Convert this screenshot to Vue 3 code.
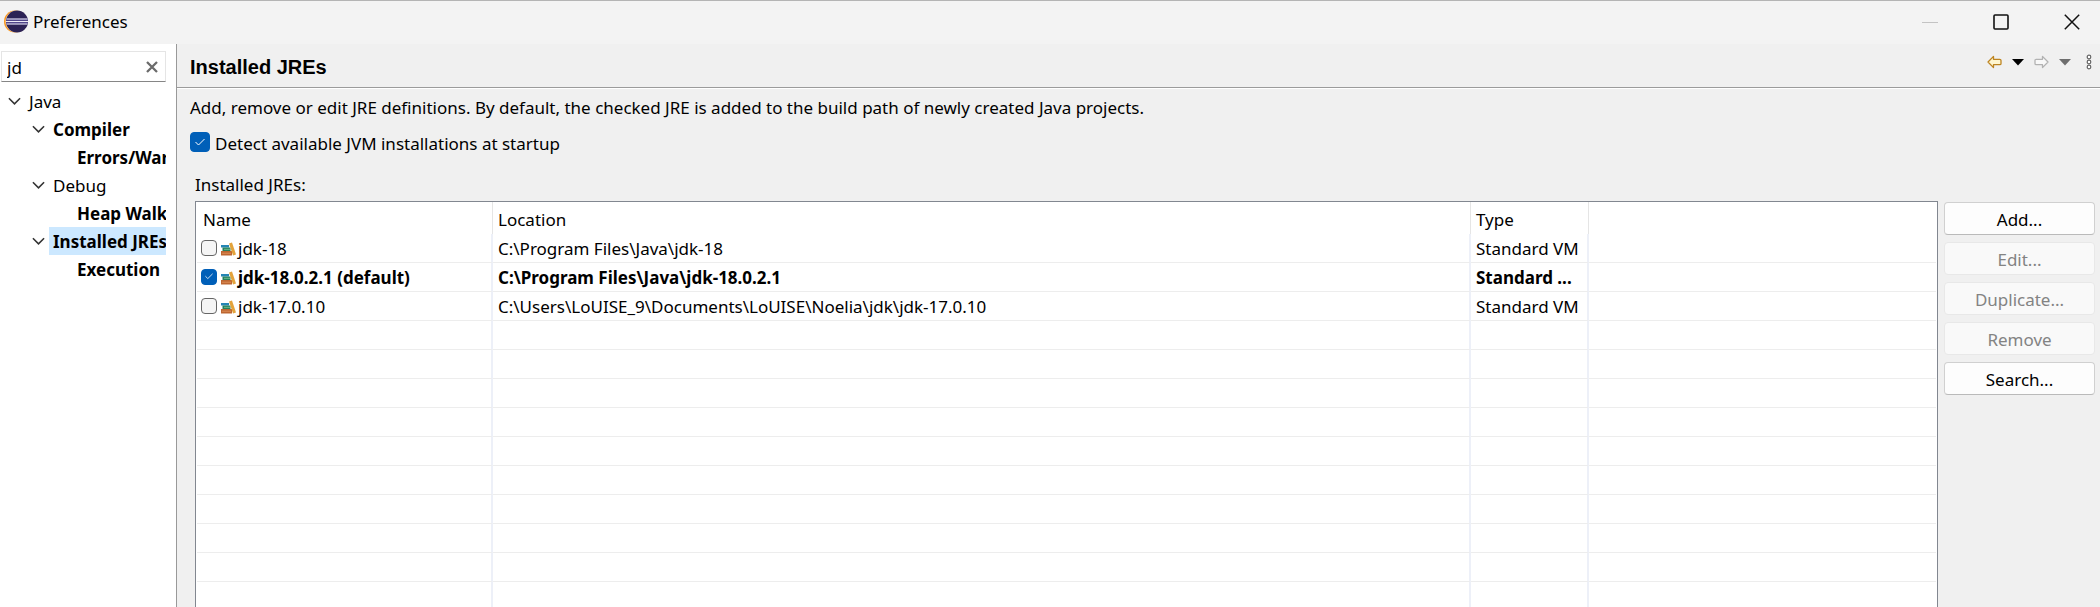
<script setup>
import { ref } from 'vue'

const filter = ref('jd')
const detect = ref(true)

const tree = [
  { label: 'Java', level: 0, open: true },
  { label: 'Compiler', level: 1, open: true, bold: true },
  { label: 'Errors/Warnings', level: 2, bold: true },
  { label: 'Debug', level: 1, open: true },
  { label: 'Heap Walking', level: 2, bold: true },
  { label: 'Installed JREs', level: 1, open: true, bold: true, selected: true },
  { label: 'Execution', level: 2, bold: true },
]

const jres = ref([
  { name: 'jdk-18', location: 'C:\\Program Files\\Java\\jdk-18', type: 'Standard VM', checked: false },
  { name: 'jdk-18.0.2.1 (default)', location: 'C:\\Program Files\\Java\\jdk-18.0.2.1', type: 'Standard ...', checked: true },
  { name: 'jdk-17.0.10', location: 'C:\\Users\\LoUISE_9\\Documents\\LoUISE\\Noelia\\jdk\\jdk-17.0.10', type: 'Standard VM', checked: false },
])

const actions = [
  { label: 'Add...', enabled: true },
  { label: 'Edit...', enabled: false },
  { label: 'Duplicate...', enabled: false },
  { label: 'Remove', enabled: false },
  { label: 'Search...', enabled: true },
]
</script>

<template>
  <div class="window">
    <header class="titlebar">
      <svg class="logo" viewBox="0 0 24 24" aria-hidden="true">
        <circle cx="11" cy="11.500" r="11" fill="#f7941e" />
        <circle cx="12.500" cy="11.500" r="11" fill="#fbe3c3" />
        <circle cx="13" cy="11.500" r="11" fill="#2c2255" />
        <path d="M2 8.500h22v6H2z" fill="#51468a" />
        <path d="M2.400 9h21.200M2 11.500h22M2.400 14h21.200" stroke="#eceaf6" stroke-width="1.200" />
      </svg>
      <span class="caption">Preferences</span>
      <div class="controls">
        <button type="button" aria-label="Minimize" disabled>
          <svg viewBox="0 0 16 16"><path d="M0 8.500h16" stroke="#c3c3c3" /></svg>
        </button>
        <button type="button" aria-label="Maximize">
          <svg viewBox="0 0 16 16"><rect x="1" y="1" width="14" height="14" rx="1" fill="none" stroke="#111" stroke-width="1.600" /></svg>
        </button>
        <button type="button" aria-label="Close">
          <svg viewBox="0 0 16 16"><path d="M.8.8l14.400 14.400M15.200.8.8 15.200" stroke="#111" stroke-width="1.500" /></svg>
        </button>
      </div>
    </header>

    <div class="content">
      <aside class="sidebar">
        <div class="filter">
          <input v-model="filter" type="text" aria-label="Filter" />
          <button type="button" aria-label="Clear" @click="filter = ''">
            <svg viewBox="0 0 12 12"><path d="M1 1l10 10M11 1 1 11" stroke="#6b6b6b" stroke-width="2.300" /></svg>
          </button>
        </div>
        <ul class="tree">
          <li v-for="item in tree" :key="item.label" :class="['level' + item.level, { bold: item.bold, selected: item.selected }]">
            <svg v-if="item.open" class="chevron" viewBox="0 0 14 8"><path d="M1 1l6 6 6-6" fill="none" stroke="#333" stroke-width="1.700" /></svg>
            <span v-else class="chevron"></span>
            <span class="node">{{ item.label }}</span>
          </li>
        </ul>
      </aside>

      <main class="page">
        <div class="page-head">
          <h1>Installed JREs</h1>
          <div class="nav">
            <button type="button" aria-label="Back">
              <svg width="15" height="14" viewBox="0 0 15 14"><path d="M1 7l5.500-5.600v2.900h6.300q1.200 0 1.200 1.200v3q0 1.200-1.200 1.200H6.500v2.900z" fill="#fff6cf" stroke="#bd8420" stroke-width="1.300" stroke-linejoin="round" /></svg>
            </button>
            <button type="button" aria-label="Back history">
              <svg width="12" height="7" viewBox="0 0 12 7"><path d="M0 0h12L6 6.500z" fill="#000" /></svg>
            </button>
            <button type="button" aria-label="Forward" disabled>
              <svg width="15" height="14" viewBox="0 0 15 14"><path d="M14 7L8.500 1.400v2.900H2.200Q1 4.300 1 5.500v3q0 1.200 1.200 1.200h6.300v2.900z" fill="#f8f8f8" stroke="#b2b2b2" stroke-width="1.300" stroke-linejoin="round" /></svg>
            </button>
            <button type="button" aria-label="Forward history" disabled>
              <svg width="12" height="7" viewBox="0 0 12 7"><path d="M0 0h12L6 6.500z" fill="#6e6e6e" /></svg>
            </button>
            <button type="button" aria-label="More">
              <svg width="6" height="16" viewBox="0 0 6 16"><g fill="#fff" stroke="#666" stroke-width="1.200"><circle cx="3" cy="3" r="1.800" /><circle cx="3" cy="8" r="1.800" /><circle cx="3" cy="13" r="1.800" /></g></svg>
            </button>
          </div>
        </div>

        <div class="page-body">
          <p class="intro">Add, remove or edit JRE definitions. By default, the checked JRE is added to the build path of newly created Java projects.</p>
          <label class="detect">
            <span class="check large">
              <input v-model="detect" type="checkbox" />
              <svg viewBox="0 0 10 8"><path d="M.5 4l3 3 6-6" /></svg>
            </span>
            <span>Detect available JVM installations at startup</span>
          </label>
          <h2 id="jre-label">Installed JREs:</h2>

          <div class="workspace">
            <div class="list">
              <table aria-labelledby="jre-label">
                <colgroup><col class="c-name" /><col class="c-location" /><col class="c-type" /><col /></colgroup>
                <thead>
                  <tr><th>Name</th><th>Location</th><th>Type</th><th></th></tr>
                </thead>
                <tbody>
                  <tr v-for="jre in jres" :key="jre.name" :class="{ bold: jre.checked }">
                    <td>
                      <label class="jre">
                        <span class="check">
                          <input v-model="jre.checked" type="checkbox" />
                          <svg viewBox="0 0 10 8"><path d="M.5 4l3 3 6-6" /></svg>
                        </span>
                        <svg class="books" viewBox="0 0 15 14" aria-hidden="true">
                          <path d="M0 3h8v2.500H0z" fill="#2585b5" />
                          <path d="M1.500 5.500H9.500V9H1.500z" fill="#26805c" /><path d="M3 7.300h6" stroke="#6dbb8e" />
                          <path d="M0 9h11v4.500H0z" fill="#bd6631" /><path d="M1 11.200h9" stroke="#dc8f58" />
                          <path d="M8 1.500l3-1L15 12.500l-3 1z" fill="#e3a33b" />
                        </svg>
                        <span>{{ jre.name }}</span>
                      </label>
                    </td>
                    <td>{{ jre.location }}</td>
                    <td>{{ jre.type }}</td>
                    <td></td>
                  </tr>
                  <tr v-for="n in 12" :key="n"><td></td><td></td><td></td><td></td></tr>
                </tbody>
              </table>
            </div>
            <div class="actions">
              <button v-for="action in actions" :key="action.label" type="button" :disabled="!action.enabled">{{ action.label }}</button>
            </div>
          </div>
        </div>
      </main>
    </div>
  </div>
</template>

<style>
body { margin: 0; }
</style>

<style scoped>
* { box-sizing: border-box; }
.window {
  display: flex;
  flex-direction: column;
  height: 100vh;
  overflow: hidden;
  background: #f0f0f0;
  color: #000;
  font: 17px/28px "Segoe UI", "Noto Sans", "Open Sans", sans-serif;
}
button { padding: 0; border: 0; background: none; font: inherit; color: inherit; }
svg { display: block; }

.titlebar {
  display: flex;
  flex: none;
  align-items: center;
  height: 44px;
  padding: 0 0 2px 4px;
  border-top: 1px solid #b4b4b4;
  background: #f3f3f3;
}
.logo { width: 24px; height: 24px; }
.caption { margin-left: 5px; }
.controls { display: flex; height: 100%; margin-left: auto; }
.controls button { display: grid; place-items: center; width: 71px; }
.controls button:last-child { width: 57px; margin-left: 7px; }
.controls svg { width: 16px; height: 16px; }

.content { display: flex; flex: 1; min-height: 0; }
.sidebar {
  flex: none;
  width: 177px;
  padding: 7px 10px 0 0;
  border-right: 1px solid #999;
  background: #fff;
}
.filter {
  display: flex;
  align-items: center;
  height: 31px;
  margin: 0 0 5px 1px;
  border: 1px solid #e5e5e5;
  border-bottom-color: #868686;
}
.filter input {
  flex: 1;
  min-width: 0;
  height: 29px;
  padding: 2px 0 0 5px;
  border: 0;
  outline: 0;
  background: none;
  font: inherit;
}
.filter button { width: 26px; height: 29px; display: grid; place-items: center; }
.filter svg { width: 12px; height: 12px; }
.tree { margin: 0; padding: 0; overflow: hidden; list-style: none; }
.tree li { display: flex; align-items: center; height: 28px; padding-left: 8px; }
.tree .level1 { padding-left: 32px; }
.tree .level2 { padding-left: 56px; }
.chevron { flex: none; width: 13px; height: 8px; margin-right: 4px; }
.node { flex: 1; height: 28px; padding: 1px 0 0 4px; white-space: nowrap; }
.selected .node { background: #cce8ff; }
.bold { font-weight: 700; }

.page { display: flex; flex: 1; flex-direction: column; min-width: 0; }
.page-head {
  display: flex;
  flex: none;
  align-items: center;
  justify-content: space-between;
  height: 44px;
  padding: 0 8px 0 13px;
  border-bottom: 1px solid #9b9b9b;
  box-shadow: 0 1px #fff;
}
h1 { margin: 0; padding-top: 2px; font: 700 20px/28px "Liberation Sans", Arial, sans-serif; }
.nav { display: flex; align-items: center; margin-bottom: 7px; }
.nav button { margin-left: 10px; }
.nav button:last-child { margin-left: 15px; }

.page-body { display: flex; flex: 1; flex-direction: column; min-height: 0; padding: 6px 5px 0 13px; }
.intro { margin: 0; }
.detect { display: flex; align-items: center; gap: 5px; height: 28px; margin-top: 8px; }
h2 { margin: 13px 0 0 5px; font: inherit; }
.workspace { display: flex; flex: 1; gap: 6px; min-height: 0; padding: 2px 0 0 5px; }
.list {
  flex: 1;
  min-width: 0;
  overflow: hidden;
  padding: 0 1px;
  border: 1px solid #828790;
  border-bottom: 0;
  background: #fff;
}

.check { position: relative; display: block; flex: none; width: 16px; height: 16px; }
.check.large { width: 20px; height: 20px; margin-bottom: 4px; }
.check input {
  appearance: none;
  display: block;
  width: 100%;
  height: 100%;
  margin: 0;
  border: 1px solid #666;
  border-radius: 4px;
  background: #f5f5f5;
}
.check input:checked { border-color: #005fb8; background: #005fb8; }
.check svg {
  position: absolute;
  inset: 0;
  width: 50%;
  margin: auto;
  fill: none;
  stroke: #fff;
  stroke-width: 1;
  pointer-events: none;
}
.check input:not(:checked) + svg { display: none; }

table { width: 100%; table-layout: fixed; border-collapse: separate; border-spacing: 0; }
.c-name { width: 296px; }
.c-location { width: 978px; }
.c-type { width: 118px; }
th { height: 32px; padding: 3px 0 0 5px; border-right: 1px solid #e5e5e5; font-weight: 400; line-height: 27px; text-align: left; }
th:first-child { padding-left: 6px; }
td {
  height: 29px;
  padding: 1px 0 0 5px;
  border-right: 2px solid #edf0f8;
  border-bottom: 1px solid #ededed;
  overflow: hidden;
  line-height: 27px;
  white-space: nowrap;
}
th:last-child, td:last-child { border-right: 0; }
td:first-child { padding-left: 4px; }
.jre { display: flex; align-items: center; height: 27px; }
.jre .check { margin-bottom: 2px; }
.books { flex: none; width: 15px; height: 14px; margin: 0 2px 0 4px; }

.actions { display: flex; flex: none; flex-direction: column; gap: 7px; width: 151px; padding-top: 1px; }
.actions button {
  height: 33px;
  padding-top: 2px;
  border: 1px solid #d0d0d0;
  border-bottom-color: #bababa;
  border-radius: 4px;
  background: #fdfdfd;
}
.actions button:disabled { border-color: #e8e8e8; background: #f9f9f9; color: #838383; }
</style>
